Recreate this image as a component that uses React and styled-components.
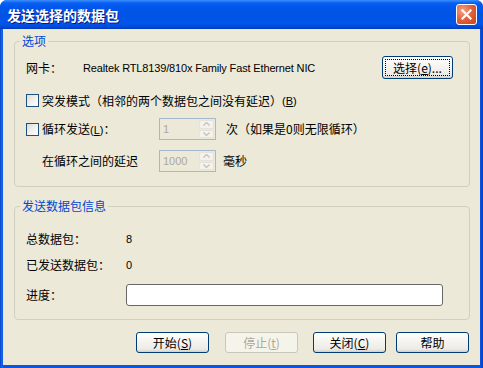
import React from "react";
import styled, { createGlobalStyle } from "styled-components";

const Global = createGlobalStyle`
  html, body { margin: 0; padding: 0; background: #ffffff; }
  body {
    font-family: Tahoma, "Noto Sans CJK SC", sans-serif;
    font-size: 12px;
    color: #000000;
  }
`;

const CJK = `"Noto Sans CJK SC", "Noto Sans", sans-serif`;
const LATIN = `Tahoma, "Liberation Sans", "Noto Sans CJK SC", sans-serif`;

const Window = styled.div`
  width: 483px;
  height: 368px;
  display: flex;
  flex-direction: column;
  background: linear-gradient(to right, #0842c8 0px, #166aee 2px, #0a55e5 3px, #0a55e5 480px, #0841c0 483px);
  border-radius: 7px 7px 0 0;
  overflow: hidden;
`;

const TitleBar = styled.div`
  height: 29px;
  flex: none;
  display: flex;
  align-items: center;
  padding: 0 6px 0 7px;
  background: linear-gradient(
    to bottom,
    #3d8ffc 0px,
    #0a5ff0 3px,
    #0058ee 6px,
    #0054e3 14px,
    #0055eb 24px,
    #0048d4 27px,
    #003db8 29px
  );
`;

const Title = styled.span`
  font-family: ${CJK};
  font-size: 14px;
  font-weight: 700;
  color: #ffffff;
  text-shadow: 1px 1px 0 #0a1883;
  line-height: 16px;
`;

const CloseButton = styled.div`
  margin-left: auto;
  width: 21px;
  height: 21px;
  box-sizing: border-box;
  border: 1px solid #ffffff;
  border-radius: 3px;
  background: radial-gradient(circle at 30% 30%, #f0a58a 0%, #e2643d 45%, #c8421b 100%);
  display: flex;
  align-items: center;
  justify-content: center;
`;

const Client = styled.div`
  flex: 1;
  margin: 0 3px 3px;
  background: #ece9d8;
  padding: 6px 10px 0 11px;
  display: flex;
  flex-direction: column;
`;

const Group = styled.fieldset`
  margin: 0 0 ${p => p.$mb || 0}px;
  padding: ${p => p.$pt}px 16px ${p => p.$pb}px 11px;
  min-width: 0;
  border: 1px solid #d0d0bf;
  border-radius: 4px;
`;

const Legend = styled.legend`
  font-family: ${CJK};
  font-size: 12px;
  line-height: 12px;
  color: #0046d5;
  padding: 0 2px;
  margin-left: -6px;
`;

const Row = styled.div`
  display: flex;
  align-items: center;
  height: ${p => p.$h}px;
  margin-top: ${p => p.$mt || 0}px;
`;

const Label = styled.span`
  font-family: ${CJK};
  font-size: 12px;
  line-height: 14px;
  white-space: nowrap;
  width: ${p => (p.$w ? `${p.$w}px` : "auto")};
  padding-left: ${p => p.$pl || 0}px;
  margin-left: ${p => p.$ml || 0}px;
  box-sizing: border-box;
  flex: none;
`;

const Latin = styled.span`
  font-family: ${LATIN};
  font-size: 11px;
  white-space: nowrap;
  letter-spacing: ${p => (p.$tight ? "-0.15px" : "normal")};
`;

const PushButton = styled.button`
  font-family: ${CJK};
  font-size: 12px;
  width: ${p => p.$w || 73}px;
  height: ${p => p.$h || 21}px;
  margin-left: ${p => (p.$push ? "auto" : `${p.$ml || 0}px`)};
  padding: 0;
  flex: none;
  box-sizing: border-box;
  border: 1px solid ${p => (p.disabled ? "#c9c7ba" : "#003c74")};
  border-radius: 3px;
  color: ${p => (p.disabled ? "#aca899" : "#000000")};
  background: ${p =>
    p.disabled
      ? "#f5f4ea"
      : "linear-gradient(to bottom, #ffffff 0%, #f6f5f1 40%, #ecebe6 85%, #d6d0c5 100%)"};
  display: flex;
  align-items: center;
  justify-content: center;
  position: relative;
  &::after {
    content: "";
    display: ${p => (p.$focused ? "block" : "none")};
    position: absolute;
    inset: 2px;
    border: 1px dotted #000000;
  }
`;

const CheckBox = styled.span`
  width: 13px;
  height: 13px;
  box-sizing: border-box;
  border: 1px solid #1c5180;
  background: linear-gradient(135deg, #dcdcd7 0%, #f2f2ef 55%, #ffffff 100%);
  flex: none;
  margin-right: 3px;
`;

const SpinBox = styled.div`
  width: 57px;
  height: 22px;
  box-sizing: border-box;
  border: 1px solid #a5b8ce;
  display: flex;
  flex: none;
`;

const SpinValue = styled.div`
  flex: 1;
  padding-left: 3px;
  display: flex;
  align-items: center;
  font-family: ${LATIN};
  font-size: 11px;
  color: #aca899;
`;

const SpinButtons = styled.div`
  width: 17px;
  padding: 1px;
  box-sizing: border-box;
  display: flex;
  flex-direction: column;
  gap: 1px;
`;

const SpinHalf = styled.div`
  flex: 1;
  border-radius: 2px;
  background: #f3f2ec;
  border: 1px solid #e6e4da;
  display: flex;
  align-items: center;
  justify-content: center;
`;

const InfoRow = styled.div`
  display: grid;
  grid-template-columns: 100px 1fr;
  align-items: center;
  height: ${p => p.$h}px;
  margin-top: ${p => p.$mt || 0}px;
`;

const Progress = styled.div`
  width: 317px;
  height: 22px;
  box-sizing: border-box;
  border: 1px solid #686868;
  border-radius: 3px;
  background: #ffffff;
`;

const Footer = styled.div`
  display: flex;
  justify-content: flex-end;
  padding-right: 1px;
  margin-top: 12px;
`;

const Arrow = ({ up }) => (
  <svg width="7" height="4" viewBox="0 0 7 4">
    <polyline
      points={up ? "0.5,3.5 3.5,0.5 6.5,3.5" : "0.5,0.5 3.5,3.5 6.5,0.5"}
      fill="none"
      stroke="#c3c1b5"
      strokeWidth="1.2"
    />
  </svg>
);

const Spinner = ({ value }) => (
  <SpinBox>
    <SpinValue>{value}</SpinValue>
    <SpinButtons>
      <SpinHalf><Arrow up /></SpinHalf>
      <SpinHalf><Arrow /></SpinHalf>
    </SpinButtons>
  </SpinBox>
);

const App = () => (
  <>
    <Global />
    <Window>
      <TitleBar>
        <Title>发送选择的数据包</Title>
        <CloseButton>
          <svg width="11" height="11" viewBox="0 0 11 11">
            <path d="M1.5 1.5 L9.5 9.5 M9.5 1.5 L1.5 9.5" stroke="#ffffff" strokeWidth="2.2" strokeLinecap="square" />
          </svg>
        </CloseButton>
      </TitleBar>
      <Client>
        <Group $pt={9} $pb={14} $mb={13}>
          <Legend>选项</Legend>
          <Row $h={23}>
            <Label $w={57}>网卡：</Label>
            <Latin $tight>Realtek RTL8139/810x Family Fast Ethernet NIC</Latin>
            <PushButton $w={71} $h={23} $push $focused>
              选择(<u>e</u>)...
            </PushButton>
          </Row>
          <Row $h={13} $mt={15}>
            <CheckBox />
            <Label>突发模式（相邻的两个数据包之间没有延迟）</Label>
            <Latin>(<u>B</u>)</Latin>
          </Row>
          <Row $h={22} $mt={11}>
            <CheckBox />
            <Label $w={117}>循环发送<Latin>(<u>L</u>)</Latin>：</Label>
            <Spinner value="1" />
            <Label $ml={10}>次（如果是0则无限循环）</Label>
          </Row>
          <Row $h={22} $mt={10}>
            <Label $w={133} $pl={16}>在循环之间的延迟</Label>
            <Spinner value="1000" />
            <Label $ml={7}>毫秒</Label>
          </Row>
        </Group>
        <Group $pt={19} $pb={13}>
          <Legend>发送数据包信息</Legend>
          <InfoRow $h={16}>
            <Label>总数据包：</Label>
            <Latin>8</Latin>
          </InfoRow>
          <InfoRow $h={16} $mt={10}>
            <Label>已发送数据包：</Label>
            <Latin>0</Latin>
          </InfoRow>
          <InfoRow $h={22} $mt={11}>
            <Label>进度：</Label>
            <Progress />
          </InfoRow>
        </Group>
        <Footer>
          <PushButton>开始(<u>S</u>)</PushButton>
          <PushButton $ml={16} disabled>停止(<u>t</u>)</PushButton>
          <PushButton $ml={15}>关闭(<u>C</u>)</PushButton>
          <PushButton $ml={10}>帮助</PushButton>
        </Footer>
      </Client>
    </Window>
  </>
);

export default App;
